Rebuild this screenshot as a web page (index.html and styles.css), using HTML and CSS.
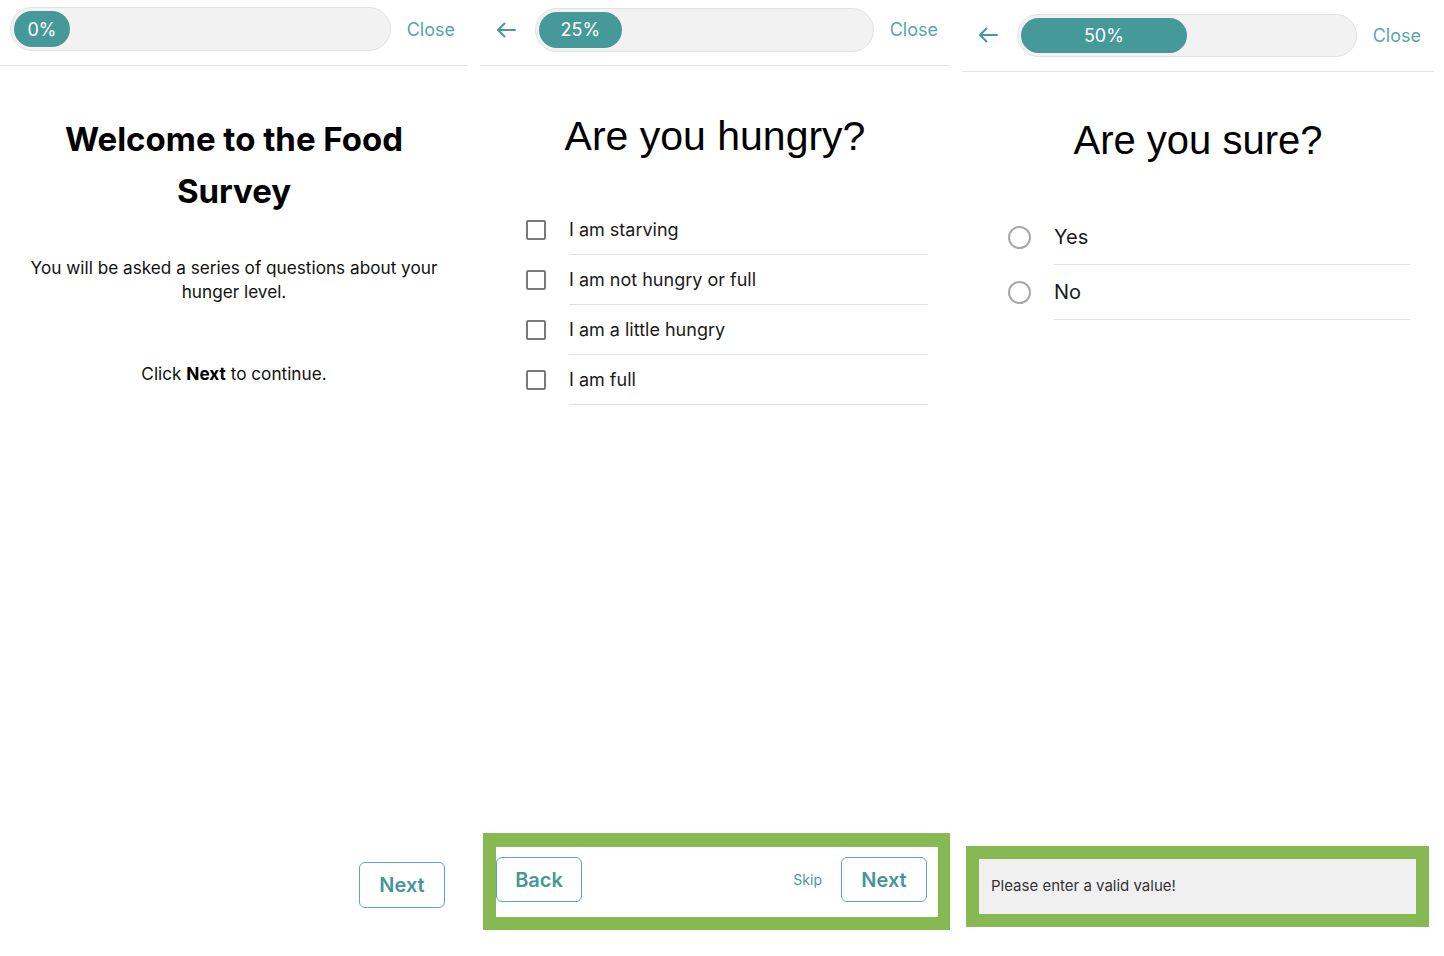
FILE: index.html
```html
<!DOCTYPE html>
<html lang="en">
<head>
<meta charset="utf-8">
<title>Food Survey</title>
<link rel="stylesheet" href="styles.css">
</head>
<body>
<div class="screens">
  <section class="panel panel-1">
    <header class="topbar">
      <div class="track"><div class="fill" style="width:0%">0%</div></div>
      <span class="close">Close</span>
    </header>
    <div class="intro">
      <h1 class="welcome">Welcome to the Food Survey</h1>
      <p class="lead">You will be asked a series of questions about your hunger level.</p>
      <p class="cta">Click <b>Next</b> to continue.</p>
    </div>
    <footer class="foot-1">
      <button class="btn">Next</button>
    </footer>
  </section>

  <section class="panel panel-2">
    <header class="topbar">
      <svg class="back-arrow" width="20" height="16" viewBox="0 0 20 16"><path d="M19 8H2M8.5 1.5L2 8l6.5 6.5" fill="none" stroke="#479a9a" stroke-width="2" stroke-linecap="round" stroke-linejoin="round"/></svg>
      <div class="track"><div class="fill" style="width:25%">25%</div></div>
      <span class="close">Close</span>
    </header>
    <h2 class="question">Are you hungry?</h2>
    <ul class="options">
      <li class="option"><span class="checkbox"></span><span class="label">I am starving</span></li>
      <li class="option"><span class="checkbox"></span><span class="label">I am not hungry or full</span></li>
      <li class="option"><span class="checkbox"></span><span class="label">I am a little hungry</span></li>
      <li class="option"><span class="checkbox"></span><span class="label">I am full</span></li>
    </ul>
    <footer class="highlight foot-2">
      <div class="nav-inner">
        <button class="btn">Back</button>
        <span class="spacer"></span>
        <span class="skip">Skip</span>
        <button class="btn">Next</button>
      </div>
    </footer>
  </section>

  <section class="panel panel-3">
    <header class="topbar">
      <svg class="back-arrow" width="20" height="16" viewBox="0 0 20 16"><path d="M19 8H2M8.5 1.5L2 8l6.5 6.5" fill="none" stroke="#479a9a" stroke-width="2" stroke-linecap="round" stroke-linejoin="round"/></svg>
      <div class="track"><div class="fill" style="width:50%">50%</div></div>
      <span class="close">Close</span>
    </header>
    <h2 class="question">Are you sure?</h2>
    <ul class="options radios">
      <li class="option"><span class="radio"></span><span class="label">Yes</span></li>
      <li class="option"><span class="radio"></span><span class="label">No</span></li>
    </ul>
    <footer class="highlight foot-3">
      <div class="error">Please enter a valid value!</div>
    </footer>
  </section>
</div>
</body>
</html>
```
FILE: styles.css
```css
* { box-sizing: border-box; }
html, body { margin: 0; padding: 0; background: #fff; }
body {
  font-family: Inter, "Noto Sans", "Liberation Sans", sans-serif;
  color: #111;
  width: 1444px;
  height: 956px;
  overflow: hidden;
}
.screens {
  display: grid;
  grid-template-columns: 468px 470px 472px;
  column-gap: 12px;
  height: 956px;
}
.panel {
  display: flex;
  flex-direction: column;
  height: 956px;
}

/* top bar */
.topbar {
  display: flex;
  align-items: center;
  border-bottom: 1px solid #e6e6e6;
}
.panel-1 .topbar { height: 66px; padding: 7px 13px 14px 10px; }
.panel-2 .topbar { height: 66px; padding: 8px 12px 14px 16px; }
.panel-3 .topbar { height: 72px; padding: 14px 13px 15px 16px; }

.back-arrow { flex: none; margin-right: 19px; }
.track {
  flex: 1;
  height: 44px;
  padding: 3px;
  background: #f2f2f2;
  border: 1px solid #e2e2e2;
  border-radius: 22px;
}
.panel-3 .track { height: 43px; }
.fill {
  height: 100%;
  min-width: 56px;
  border-radius: 18px;
  background: #469999;
  color: #fff;
  font-size: 18px;
  display: flex;
  align-items: center;
  justify-content: center;
}
.close {
  flex: none;
  margin-left: 16px;
  font-size: 18px;
  color: #55a8a8;
}

/* intro screen */
.intro {
  text-align: center;
  padding: 47px 20px 0;
}
.welcome {
  margin: 0 auto;
  width: 380px;
  font-size: 33px;
  line-height: 52px;
  font-weight: 700;
  color: #000;
}
.lead {
  margin: 39px 0 0;
  font-size: 17.2px;
  line-height: 24px;
  color: #111;
}
.cta {
  margin: 58px 0 0;
  font-size: 17.2px;
  line-height: 24px;
  color: #111;
}
.cta b { font-weight: 700; color: #000; }

/* questions */
.question {
  margin: 46px 0 0;
  text-align: center;
  font-family: "Liberation Sans", Arial, sans-serif;
  font-weight: 400;
  font-size: 41px;
  line-height: 48px;
  color: #000;
}
.panel-3 .question { margin-top: 44px; font-size: 40px; }
.options {
  list-style: none;
  margin: 45px 22px 0 46px;
  padding: 0;
}
.option {
  display: flex;
  align-items: center;
}
.checkbox {
  flex: none;
  width: 20px;
  height: 20px;
  border: 2px solid #7a7a7a;
  border-radius: 2px;
  margin-right: 23px;
}
.label {
  flex: 1;
  height: 50px;
  display: flex;
  align-items: center;
  border-bottom: 1px solid #e2e2e2;
  font-size: 18px;
  color: #1a1a1a;
}
.radios { margin: 46px 24px 0 46px; }
.radios .label { height: 55px; font-size: 20px; }
.radio {
  flex: none;
  width: 23px;
  height: 23px;
  border: 2px solid #a8a8a8;
  border-radius: 50%;
  margin-right: 23px;
}

/* footers */
.btn {
  font-family: inherit;
  font-size: 20px;
  font-weight: 600;
  color: #459797;
  background: #fff;
  border: 1.5px solid #5aabab;
  border-radius: 6px;
  width: 86px;
  height: 46px;
  padding: 0;
}
.foot-1 {
  margin-top: auto;
  margin-bottom: 48px;
  display: flex;
  justify-content: flex-end;
  padding-right: 23px;
}
.highlight {
  margin-top: auto;
  border: 13px solid #86b953;
}
.foot-2 {
  margin: auto 0 26px 3px;
  height: 97px;
  border-top-width: 14px;
  border-right-width: 12px;
}
.nav-inner {
  display: flex;
  align-items: flex-start;
  height: 100%;
  padding: 10px 11px 0 0;
  background: #fff;
}
.nav-inner .btn { height: 45px; }
.spacer { flex: 1; }
.skip {
  font-size: 14px;
  line-height: 45px;
  color: #479a9a;
  margin-right: 19px;
}
.foot-3 {
  margin: auto 5px 29px 4px;
  height: 81px;
}
.error {
  height: 100%;
  background: #f0f0f0;
  padding: 0 0 2px 12px;
  display: flex;
  align-items: center;
  font-size: 15px;
  color: #333;
}
```
